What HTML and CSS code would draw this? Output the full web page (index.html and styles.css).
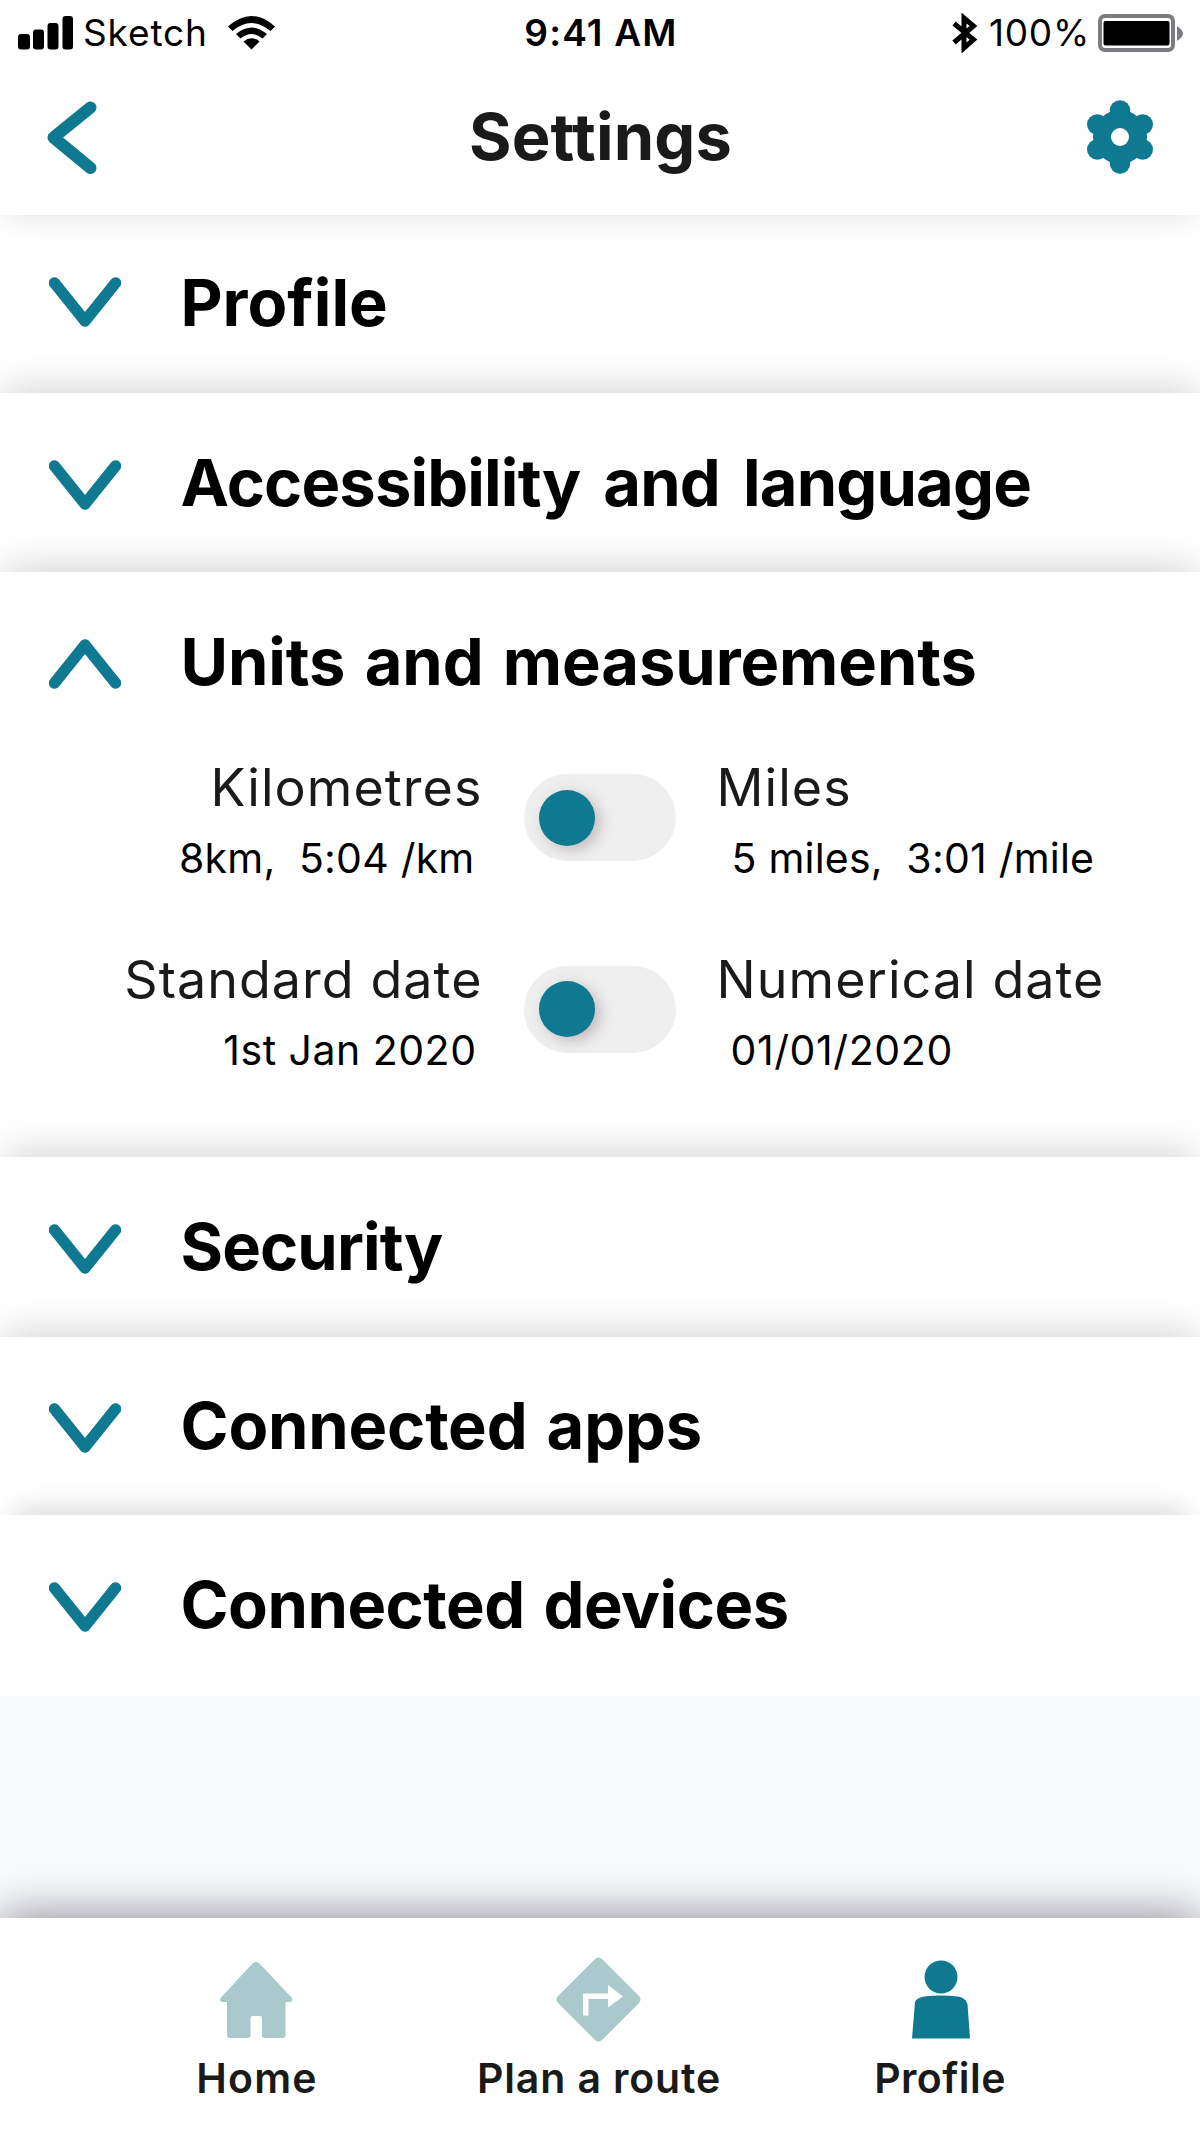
FILE: index.html
```html
<!DOCTYPE html>
<html lang="en">
<head>
<meta charset="utf-8">
<title>Settings</title>
<link rel="stylesheet" href="styles.css">
</head>
<body>
<svg class="defs" aria-hidden="true">
  <symbol id="chevron" viewBox="0 0 72 50"><path d="M5.500 6L36 44L66.500 6" fill="none" stroke="currentColor" stroke-width="11.500" stroke-linecap="round" stroke-linejoin="round"/></symbol>
</svg>
<div class="app">
  <header class="header">
    <div class="status">
      <div class="status-left">
        <svg width="56" height="34" viewBox="0 0 56 34"><rect x="0" y="18" width="12" height="15.500" rx="3"/><rect x="15" y="13.500" width="11" height="20" rx="3"/><rect x="29.500" y="7" width="11" height="26.500" rx="3"/><rect x="44.500" y="0" width="10.500" height="33.500" rx="3"/></svg>
        <span class="carrier">Sketch</span>
        <svg width="48" height="34" viewBox="0 0 48 34"><path d="M0 10.500Q23.500 -10.500 47 10.500L42.500 15Q23.500 -1 4.500 15Z"/><path d="M8 18Q23.500 5 39 18L34.500 22.500Q23.500 13.500 12.500 22.500Z"/><path d="M15.500 25.500Q23.500 19 31.500 25.500L23.500 33.500Z"/></svg>
      </div>
      <span class="time">9:41 AM</span>
      <div class="status-right">
        <svg width="26" height="40" viewBox="0 0 26 40"><path d="M2 10.500L21.500 26.500L12 35V5L21.500 13L2 29.500" fill="none" stroke="#000" stroke-width="5"/></svg>
        <span class="percent">100%</span>
        <svg width="86" height="38" viewBox="0 0 86 38"><rect x="2" y="2" width="73" height="34" rx="5" fill="none" stroke="#7b7a7f" stroke-width="4"/><rect x="5.500" y="7" width="66" height="24.500" rx="2"/><path d="M79 12Q85 16 85 19.500Q85 23 79 27Z" fill="#7b7a7f"/></svg>
      </div>
    </div>
    <div class="titlebar">
      <svg class="teal" width="50" height="73" viewBox="0 0 50 73"><path d="M43.500 6.500L6.500 36.500L43.500 67" fill="none" stroke="currentColor" stroke-width="12" stroke-linecap="round" stroke-linejoin="round"/></svg>
      <h1 class="title">Settings</h1>
      <svg class="teal" width="66" height="74" viewBox="-33 -37 66 74"><g fill="currentColor"><circle r="27"/><circle cy="-26.500" r="10.300"/><circle cy="26.500" r="10.300"/><circle cx="-22.700" cy="-12.500" r="10.300"/><circle cx="22.700" cy="-12.500" r="10.300"/><circle cx="-22.700" cy="12.500" r="10.300"/><circle cx="22.700" cy="12.500" r="10.300"/></g><circle r="9" fill="#fff"/></svg>
    </div>
  </header>

  <main class="sections">
    <section class="section profile"><div class="head"><svg class="chevron"><use href="#chevron"/></svg><h2>Profile</h2></div></section>
    <section class="section access"><div class="head"><svg class="chevron"><use href="#chevron"/></svg><h2>Accessibility and language</h2></div></section>
    <section class="section units">
      <div class="head"><svg class="chevron open"><use href="#chevron"/></svg><h2>Units and measurements</h2></div>
      <div class="options">
        <div class="option start"><span class="name">Kilometres</span><span class="sample distance">8km,&nbsp; 5:04 /km</span></div>
        <span class="toggle"><span class="knob"></span></span>
        <div class="option"><span class="name">Miles</span><span class="sample distance">5 miles,&nbsp; 3:01 /mile</span></div>
        <div class="option start"><span class="name">Standard date</span><span class="sample date">1st Jan 2020</span></div>
        <span class="toggle"><span class="knob"></span></span>
        <div class="option"><span class="name">Numerical date</span><span class="sample date">01/01/2020</span></div>
      </div>
    </section>
    <section class="section security"><div class="head"><svg class="chevron"><use href="#chevron"/></svg><h2>Security</h2></div></section>
    <section class="section apps"><div class="head"><svg class="chevron"><use href="#chevron"/></svg><h2>Connected apps</h2></div></section>
    <section class="section devices"><div class="head"><svg class="chevron"><use href="#chevron"/></svg><h2>Connected devices</h2></div></section>
  </main>

  <nav class="nav">
    <a class="tab home">
      <svg class="pale" width="86" height="86" viewBox="0 0 86 86"><path fill="currentColor" d="M38.500 7.500Q42 4.500 45.500 7.500L78 42Q79 46 76 46H71.500V79Q71.500 82 68.500 82H51Q48 82 48 79V62Q48 60 46 60H38.500Q36.500 60 36.500 62V79Q36.500 82 33.500 82H16Q13 82 13 79V46H8Q5 45 6.500 42Z"/></svg>
      <span>Home</span>
    </a>
    <a class="tab route">
      <svg class="pale" width="86" height="86" viewBox="0 0 86 86"><path fill="currentColor" d="M39 3Q42.500 0 46 3L83 40Q86 43.500 83 47L46 84Q42.500 87 39 84L2 47Q-1 43.500 2 40Z"/><path fill="#fff" d="M27 59.500V37.500H52V29L67 40.500L52 51.500V43H32.500V59.500Z"/></svg>
      <span>Plan a route</span>
    </a>
    <a class="tab me">
      <svg class="teal" width="86" height="86" viewBox="0 0 86 86"><g fill="currentColor"><circle cx="44" cy="21" r="16.500"/><path d="M18 46Q19 42 27 40.500Q44 38.500 61 40.500Q69 42 70.500 48L73 82.500H15Z"/></g></svg>
      <span>Profile</span>
    </a>
  </nav>
</div>
</body>
</html>
```
FILE: styles.css
```css
* { box-sizing: border-box; }
body { margin: 0; background: #f8fafd; font-family: Inter, "Liberation Sans", sans-serif; color: #1a1a1a; }
.defs { position: absolute; width: 0; height: 0; }
svg { display: block; flex: none; }
.teal { color: #107992; }
.pale { color: #a9c9cc; }
.app { width: 1200px; height: 2134px; display: flex; flex-direction: column; overflow: hidden; }

.header { position: relative; z-index: 8; height: 215px; flex: none; background: #fff; box-shadow: 0 4px 34px -4px rgba(0, 0, 0, 0.12); }
.status { height: 65px; display: grid; grid-template-columns: 1fr auto 1fr; align-items: center; padding: 0 16px 0 18px; font-size: 37px; line-height: 46px; color: #000; }
.status-left { display: flex; align-items: center; }
.status-right { display: flex; align-items: center; justify-content: flex-end; }
.carrier { margin: 0 20px 0 9px; letter-spacing: 0.870px; }
.time { font-weight: 600; letter-spacing: 1.200px; }
.percent { margin: 0 8px 0 11px; letter-spacing: 0.760px; }
.titlebar { height: 144px; display: flex; align-items: center; justify-content: space-between; padding: 0 47px; }
.title { margin: 0; font-size: 65px; line-height: 78px; font-weight: 700; letter-spacing: 0.100px; padding-left: 17px; }

.sections { flex: 1; display: flex; flex-direction: column; }
.section { position: relative; flex: none; height: 179px; padding: 51px 0 0 49px; background: #fff; box-shadow: 0 -4px 42px -4px rgba(0, 0, 20, 0.21); }
.section.profile { height: 178px; padding-top: 49px; box-shadow: none; }
.section.units { height: 585px; }
.section.security { height: 180px; }
.section.apps { height: 178px; padding-top: 50px; }
.section.devices { height: 181px; box-shadow: 0 -20px 26px -14px rgba(0, 0, 20, 0.15); }
.head { display: flex; align-items: flex-start; gap: 59.500px; }
.chevron { width: 72px; height: 50px; margin-top: 16px; color: #107992; }
.profile .chevron { margin-top: 13px; }
.chevron.open { transform: scaleY(-1); }
h2 { margin: 0; font-size: 65px; line-height: 78px; font-weight: 700; color: #000; letter-spacing: -0.200px; word-spacing: 4px; white-space: nowrap; }
.profile h2 { letter-spacing: 0; }
.access h2 { letter-spacing: -0.850px; word-spacing: 8.500px; }
.units h2 { letter-spacing: -0.100px; word-spacing: 4px; }
.security h2 { letter-spacing: -0.900px; }
.devices h2 { letter-spacing: -0.500px; }

.options { display: grid; grid-template-columns: 433.500px 152px 1fr; column-gap: 41px; row-gap: 64.500px; margin-top: 56px; }
.option { display: flex; flex-direction: column; align-items: flex-start; gap: 14px; height: 127px; white-space: nowrap; }
.option.start { align-items: flex-end; }
.name { font-size: 52px; line-height: 62px; letter-spacing: 1.050px; }
.sample { font-size: 41px; line-height: 50px; letter-spacing: 0.220px; color: #000; padding-left: 15px; }
.sample.date { letter-spacing: 0.600px; padding-left: 14px; }
.start .sample { padding: 0 8px 0 0; }
.start .sample.date { padding-right: 6px; letter-spacing: 0.500px; }
.toggle { width: 152px; height: 87px; margin-top: 17px; border-radius: 44px; background: #efefef; padding: 15.500px; }
.knob { display: block; width: 56px; height: 56px; border-radius: 50%; background: #107992; box-shadow: 5px 4px 14px rgba(60, 30, 30, 0.25); }

.nav { position: relative; flex: none; height: 216px; display: flex; justify-content: center; padding-top: 38px; background: #fff; box-shadow: 0 -2px 44px rgba(10, 0, 20, 0.46); }
.tab { width: 341px; display: flex; flex-direction: column; align-items: center; gap: 11px; font-size: 41px; line-height: 50px; font-weight: 600; letter-spacing: 0.860px; white-space: nowrap; margin-left: -1px; margin-right: 1px; }
.home { letter-spacing: 1.180px; margin-left: -2px; margin-right: 2px; }
.me { letter-spacing: 0.430px; }
```
